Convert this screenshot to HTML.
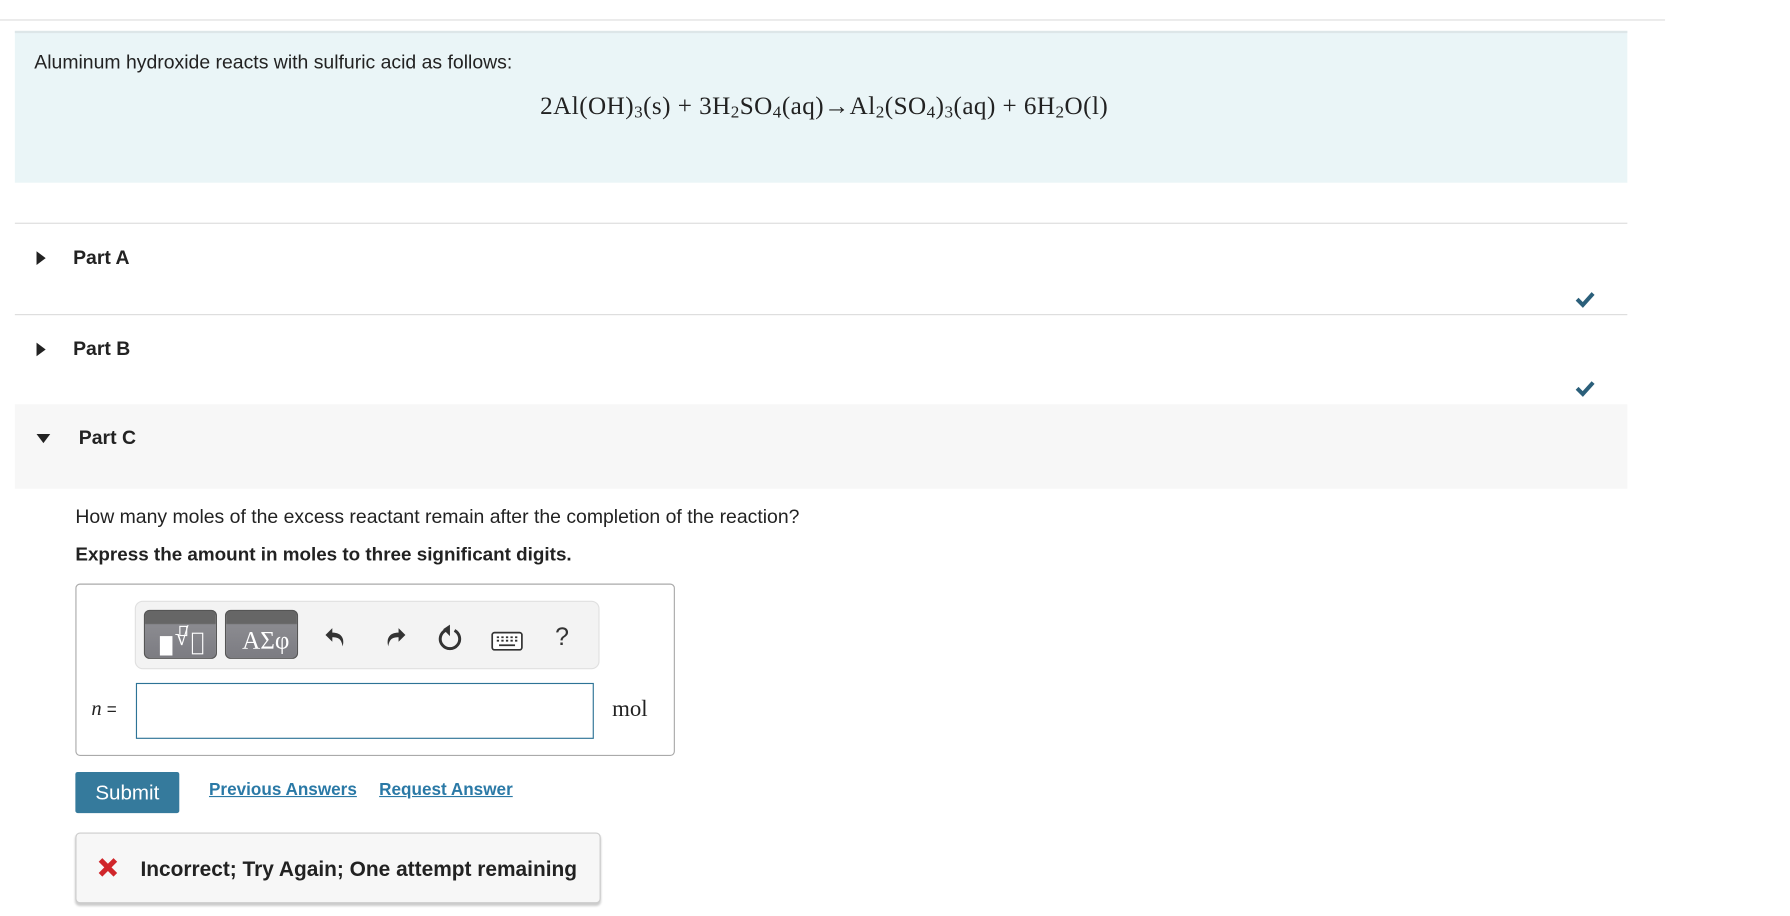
<!DOCTYPE html>
<html><head><meta charset="utf-8"><style>
html,body{margin:0;padding:0;background:#fff;width:1790px;height:915px;overflow:hidden}
#w{position:absolute;left:0;top:0;width:1568px;height:802px;transform:scale(1.142);transform-origin:0 0;font-family:"Liberation Sans",sans-serif;color:#222}
.a{position:absolute}
.hl{position:absolute;height:1px;background:#ddd}
.eq{font-family:"Liberation Serif",serif;font-size:22px;white-space:nowrap;letter-spacing:0.4px}
.eq sub{font-size:15px;vertical-align:-3px}
.part{font-weight:bold;font-size:17px}
.tri{width:0;height:0;border-top:6px solid transparent;border-bottom:6px solid transparent;border-left:8px solid #222}
.trid{width:0;height:0;border-left:6px solid transparent;border-right:6px solid transparent;border-top:8px solid #222}
.btn{position:absolute;top:7px;width:64px;height:43px;border-radius:5px;background:linear-gradient(#666 0,#666 11px,#8b8b90 12px,#7c7c82 100%);border:1px solid #555;box-sizing:border-box}
a{color:#2a79a6;font-weight:bold;font-size:15px;text-decoration:underline}
</style></head><body><div id="w">
<div class="hl" style="left:0;top:17px;width:1458px"></div>
<div class="a" style="left:13px;top:27px;width:1412px;height:133px;background:#eaf5f7;border-top:2px solid #dde6e8;box-sizing:border-box"></div>
<div class="a" style="left:30px;top:45px;font-size:17px">Aluminum hydroxide reacts with sulfuric acid as follows:</div>
<div class="a eq" style="left:473px;top:80px">2Al(OH)<sub>3</sub>(s) + 3H<sub>2</sub>SO<sub>4</sub>(aq)→Al<sub>2</sub>(SO<sub>4</sub>)<sub>3</sub>(aq) + 6H<sub>2</sub>O(l)</div>
<div class="hl" style="left:13px;top:195px;width:1412px"></div>
<div class="a tri" style="left:32px;top:220px"></div>
<div class="a part" style="left:64px;top:216px">Part A</div>
<svg class="a" style="left:1379px;top:255px" width="18" height="15" viewBox="0 0 18 15"><path d="M2 7 L7 12 L16 2" fill="none" stroke="#2b5f7a" stroke-width="3.5"/></svg>
<div class="hl" style="left:13px;top:275px;width:1412px"></div>
<div class="a tri" style="left:32px;top:300px"></div>
<div class="a part" style="left:64px;top:296px">Part B</div>
<svg class="a" style="left:1379px;top:333px" width="18" height="15" viewBox="0 0 18 15"><path d="M2 7 L7 12 L16 2" fill="none" stroke="#2b5f7a" stroke-width="3.5"/></svg>
<div class="a" style="left:13px;top:354px;width:1412px;height:74px;background:#f7f7f7"></div>
<div class="a trid" style="left:32px;top:380px"></div>
<div class="a part" style="left:69px;top:374px">Part C</div>
<div class="a" style="left:66px;top:443px;font-size:17px">How many moles of the excess reactant remain after the completion of the reaction?</div>
<div class="a" style="left:66px;top:477px;font-size:16.5px;font-weight:bold">Express the amount in moles to three significant digits.</div>
<div class="a" style="left:66px;top:511px;width:525px;height:151px;border:1px solid #aaa;border-radius:4px;box-sizing:border-box"></div>
<div class="a" style="left:118px;top:526px;width:407px;height:60px;background:#f3f3f3;border:1px solid #e0e0e0;border-radius:7px;box-sizing:border-box">
 <div class="btn" style="left:7px"><div class="a" style="left:13px;top:22px;width:11px;height:17px;background:#fff"></div><div class="a" style="left:26px;top:10px;color:#fff;font-family:'Liberation Serif',serif;font-size:22px">√</div><div class="a" style="left:41px;top:19px;width:8px;height:17px;border:1px solid #fff"></div><div class="a" style="left:30px;top:13px;width:5px;height:7px;border:1px solid #fff"></div></div>
 <div class="btn" style="left:78px"><div class="a" style="left:14px;top:13px;color:#fff;font-family:'Liberation Serif',serif;font-size:22px">ΑΣφ</div></div>
 <svg class="a" style="left:164px;top:20px" width="22" height="22" viewBox="0 0 22 22"><path d="M8 3 L2 9 L8 15 L8 11 C14 11 16 13 17 19 C19 12 16 7 8 7 Z" fill="#333"/></svg>
 <svg class="a" style="left:216px;top:20px" width="22" height="22" viewBox="0 0 22 22"><path d="M14 3 L20 9 L14 15 L14 11 C8 11 6 13 5 19 C3 12 6 7 14 7 Z" fill="#333"/></svg>
 <svg class="a" style="left:263px;top:19px" width="24" height="26" viewBox="0 0 24 26"><path d="M16 6 A8.5 8.5 0 1 1 8 6" fill="none" stroke="#333" stroke-width="2.6"/><path d="M10 1 L10 11 L4 5 Z" fill="#333" transform="translate(2,0)"/></svg>
 <svg class="a" style="left:311px;top:26px" width="28" height="18" viewBox="0 0 28 18"><rect x="1" y="1" width="26" height="15" rx="2" fill="#fff" stroke="#333" stroke-width="1.5"/><path d="M5 5h2M9 5h2M13 5h2M17 5h2M21 5h2M5 8h2M9 8h2M13 8h2M17 8h2M21 8h2M7 12h14" stroke="#333" stroke-width="1.6"/></svg>
 <div class="a" style="left:367px;top:18px;font-size:22px;color:#333">?</div>
</div>
<div class="a" style="left:80px;top:610px;font-family:'Liberation Serif',serif;font-style:italic;font-size:18px">n <span style="font-style:normal;font-family:'Liberation Sans',sans-serif;font-size:15px">=</span></div>
<div class="a" style="left:119px;top:598px;width:401px;height:49px;border:1px solid #2d7396;box-sizing:border-box;background:#fff"></div>
<div class="a" style="left:536px;top:610px;font-family:'Liberation Serif',serif;font-size:20px">mol</div>
<div class="a" style="left:66px;top:676px;width:91px;height:36px;background:#357a9c;border-radius:2px;color:#fff;font-size:18px;line-height:36px;text-align:center">Submit</div>
<a class="a" style="left:183px;top:683px">Previous Answers</a>
<a class="a" style="left:332px;top:683px">Request Answer</a>
<div class="a" style="left:66px;top:729px;width:460px;height:62px;background:#f7f7f7;border:1px solid #ccc;border-radius:4px;box-shadow:0 2px 2px #ccc;box-sizing:border-box"></div>
<svg class="a" style="left:85px;top:750px" width="19" height="19" viewBox="0 0 19 19"><path d="M3 3 L16 16 M16 3 L3 16" stroke="#d0262b" stroke-width="4.5"/></svg>
<div class="a" style="left:123px;top:750px;font-size:18.3px;font-weight:bold">Incorrect; Try Again; One attempt remaining</div>
</div></body></html>
